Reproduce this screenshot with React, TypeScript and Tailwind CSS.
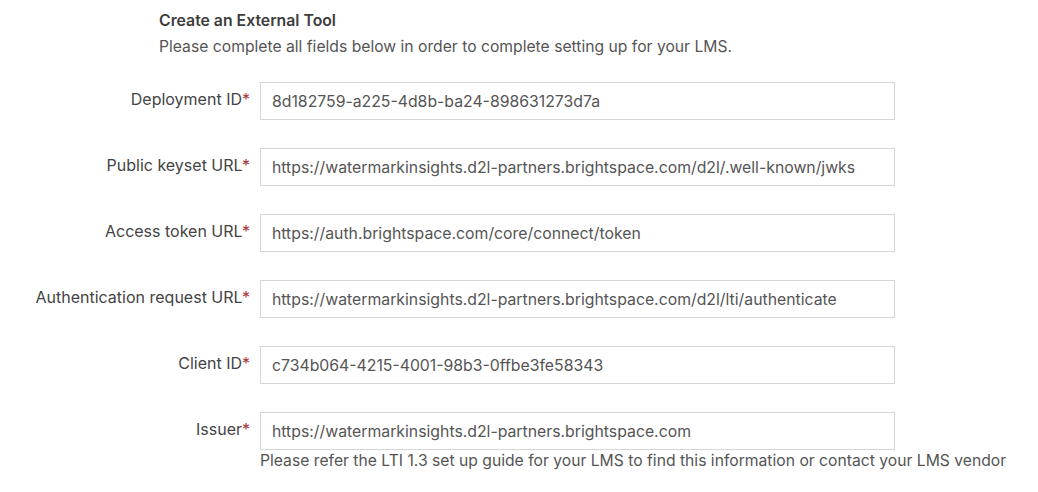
import React from "react";

const fields: { label: string; value: string }[] = [
    { label: "Deployment ID", value: "8d182759-a225-4d8b-ba24-898631273d7a" },
    {
        label: "Public keyset URL",
        value: "https://watermarkinsights.d2l-partners.brightspace.com/d2l/.well-known/jwks",
    },
    {
        label: "Access token URL",
        value: "https://auth.brightspace.com/core/connect/token",
    },
    {
        label: "Authentication request URL",
        value: "https://watermarkinsights.d2l-partners.brightspace.com/d2l/lti/authenticate",
    },
    { label: "Client ID", value: "c734b064-4215-4001-98b3-0ffbe3fe58343" },
    {
        label: "Issuer",
        value: "https://watermarkinsights.d2l-partners.brightspace.com",
    },
];

export default function App(): JSX.Element {
    return (
        <div className="w-[1038px] h-[492px] bg-white font-['Inter',sans-serif] text-[15.7px] text-[#4a4a4a] overflow-hidden">
            <div className="pl-[159px] pt-[10px]">
                <h1 className="font-semibold text-[15.8px] text-[#3d3d3d] leading-[22px]">
                    Create an External Tool
                </h1>
                <p className="mt-[4px] leading-[22px] text-[#555]">
                    Please complete all fields below in order to complete
                    setting up for your LMS.
                </p>
            </div>

            <div className="mt-[24px] flex flex-col gap-[28px]">
                {fields.map((field, i) => (
                    <div key={field.label}>
                        <div className="flex items-start">
                            <label className="w-[250px] pt-[6px] text-right text-[16px] text-[#444] leading-[22px]">
                                {field.label}
                                <span className="text-[#a8323a]">*</span>
                            </label>
                            <input
                                readOnly
                                value={field.value}
                                className="ml-[10px] w-[635px] h-[38px] border border-[#d6d6d6] px-[11px] text-[15.8px] text-[#555] outline-none"
                            />
                        </div>
                        {i === fields.length - 1 && (
                            <p className="ml-[260px] leading-[22px] text-[#555]">
                                Please refer the LTI 1.3 set up guide for your
                                LMS to find this information or contact your
                                LMS vendor
                            </p>
                        )}
                    </div>
                ))}
            </div>
        </div>
    );
}
